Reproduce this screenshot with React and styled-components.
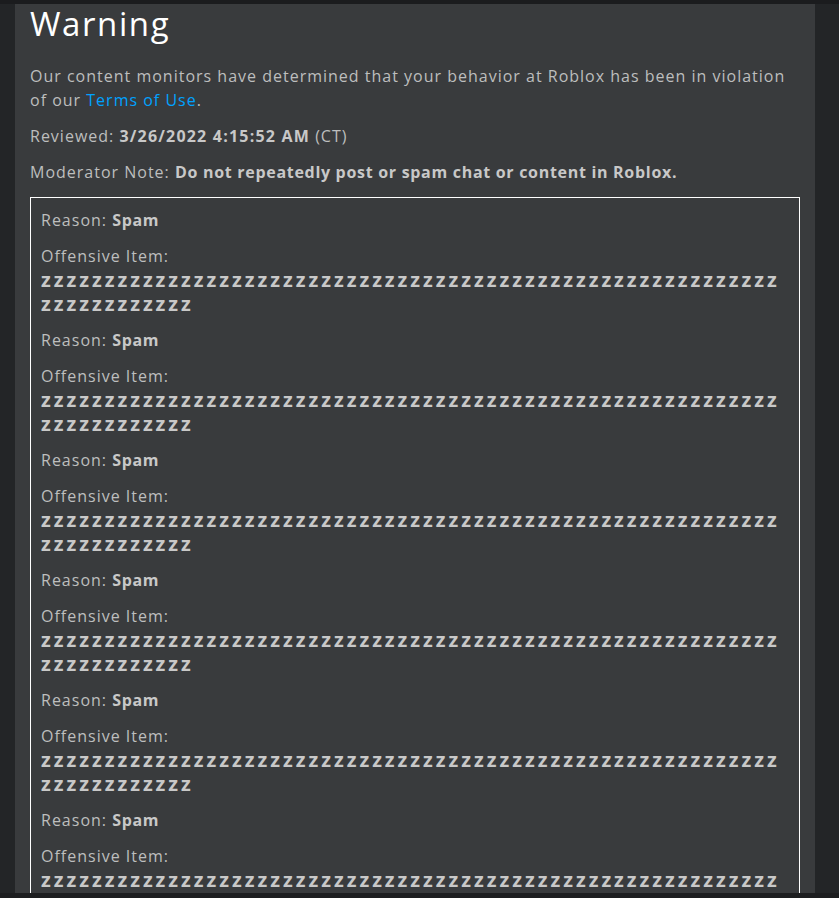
import styled, { createGlobalStyle } from 'styled-components'

const GlobalStyle = createGlobalStyle`
  html, body {
    margin: 0;
    padding: 0;
    background: #232527;
    overflow: hidden;
  }
`

const Frame = styled.div`
  height: 898px;
  display: grid;
  grid-template-rows: 4px 1fr 5px;
  background: #232527;
  font-family: 'Open Sans', 'DejaVu Sans', sans-serif;
`

const TopBar = styled.div`
  background: #1b1c1e;
`

const BottomBar = styled.div`
  background: #1d1e20;
`

const Panel = styled.section`
  margin-left: 15px;
  width: 800px;
  box-sizing: border-box;
  padding: 0 15px;
  background: #393b3d;
  overflow: hidden;
  min-height: 0;
`

const Title = styled.h1`
  margin: 0;
  font-size: 33px;
  line-height: 40px;
  font-weight: 400;
  color: #ffffff;
  letter-spacing: 1.6px;
`

const Text = styled.p`
  margin: ${(p) => p.$top ?? 12}px 0 0;
  font-size: 16px;
  line-height: 24px;
  font-weight: 400;
  color: #bdbebe;
  letter-spacing: 1px;

  b {
    font-weight: 700;
    color: #c8c8c8;
    letter-spacing: 0.7px;
  }
`

const Stamp = styled.b`
  letter-spacing: 1.2px !important;
`

const Link = styled.a`
  color: #00a2ff;
  text-decoration: none;
`

const ReasonBox = styled.div`
  margin-top: 13px;
  border: 1px solid #ffffff;
  padding: 10px 10px 0;
`

const Entry = styled.div`
  & + & {
    margin-top: 12px;
  }
`

const Item = styled.b`
  display: block;
  word-break: break-all;
  font-size: 20px;
  letter-spacing: 2.98px !important;
`

const spam = 'z'.repeat(70)

const App = () => {
  const entries = Array.from({ length: 7 })

  return (
    <Frame>
      <GlobalStyle />
      <TopBar />
      <Panel>
        <Title>Warning</Title>
        <Text $top={20}>
          Our content monitors have determined that your behavior at Roblox has been in violation
          of our <Link href="#">Terms of Use</Link>.
        </Text>
        <Text>
          Reviewed: <Stamp>3/26/2022 4:15:52 AM</Stamp> (CT)
        </Text>
        <Text>
          Moderator Note: <b>Do not repeatedly post or spam chat or content in Roblox.</b>
        </Text>
        <ReasonBox>
          {entries.map((_, i) => (
            <Entry key={i}>
              <Text $top={0}>
                Reason: <b>Spam</b>
              </Text>
              <Text>
                Offensive Item:
                <Item>{spam}</Item>
              </Text>
            </Entry>
          ))}
        </ReasonBox>
      </Panel>
      <BottomBar />
    </Frame>
  )
}

export default App
